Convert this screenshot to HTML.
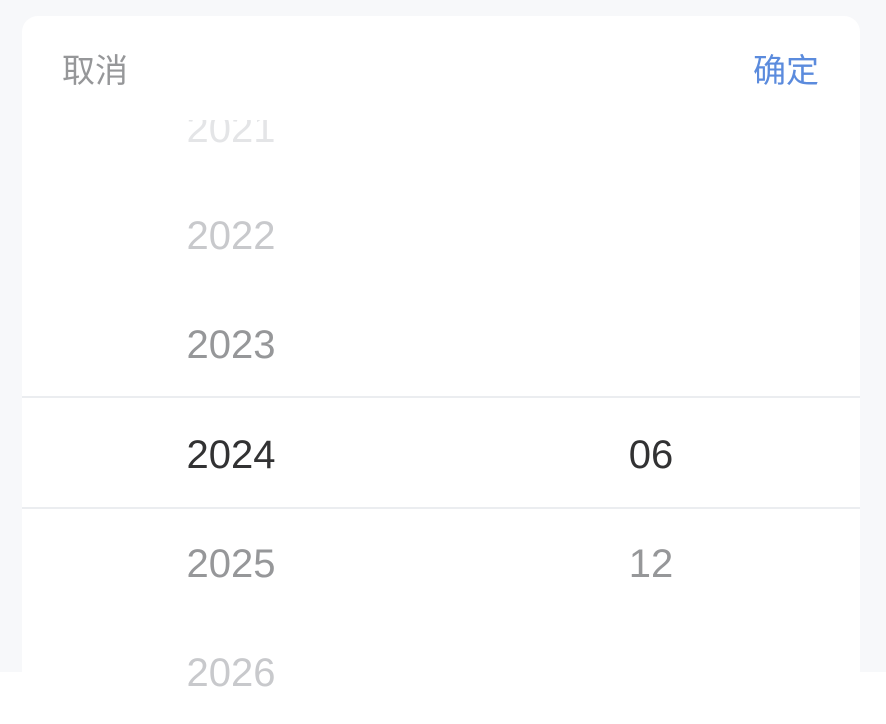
<!DOCTYPE html>
<html><head><meta charset="utf-8"><style>
html,body{margin:0;padding:0;}
body{width:886px;height:724px;position:relative;overflow:hidden;background:#fff;font-family:"Liberation Sans","Noto Sans CJK SC",sans-serif;}
.bg{position:absolute;left:0;top:0;width:886px;height:672px;background:#f7f8fa;}
.card{position:absolute;left:22px;top:16px;width:838px;height:708px;background:#fff;border-radius:16px 16px 0 0;overflow:hidden;}
.hd{position:absolute;top:35px;font-size:33px;line-height:40px;}
.c{left:40px;color:#969799;}
.o{right:41px;color:#5b8bdd;}
.pk{position:absolute;left:0;top:104px;width:838px;height:620px;overflow:hidden;}
.r{position:absolute;width:200px;text-align:center;font-size:40px;line-height:40px;height:40px;}
.y{left:109px;}
.m{left:529px;}
.line{position:absolute;left:0;width:838px;height:2px;background:#ebedf0;}
</style></head><body>
<div class="bg"></div>
<div class="card">
<div class="hd c">取消</div>
<div class="hd o">确定</div>
<div class="pk">
<div class="r y" style="top:-11px;color:#e4e5e7">2021</div>
<div class="r y" style="top:96px;color:#c8c9cc">2022</div>
<div class="r y" style="top:205px;color:#969799">2023</div>
<div class="r y" style="top:315px;color:#323233">2024</div>
<div class="r y" style="top:424px;color:#969799">2025</div>
<div class="r y" style="top:533px;color:#c8c9cc">2026</div>
<div class="r m" style="top:315px;color:#323233">06</div>
<div class="r m" style="top:424px;color:#969799">12</div>
<div class="line" style="top:276px"></div>
<div class="line" style="top:387px"></div>
</div>
</div>
</body></html>
